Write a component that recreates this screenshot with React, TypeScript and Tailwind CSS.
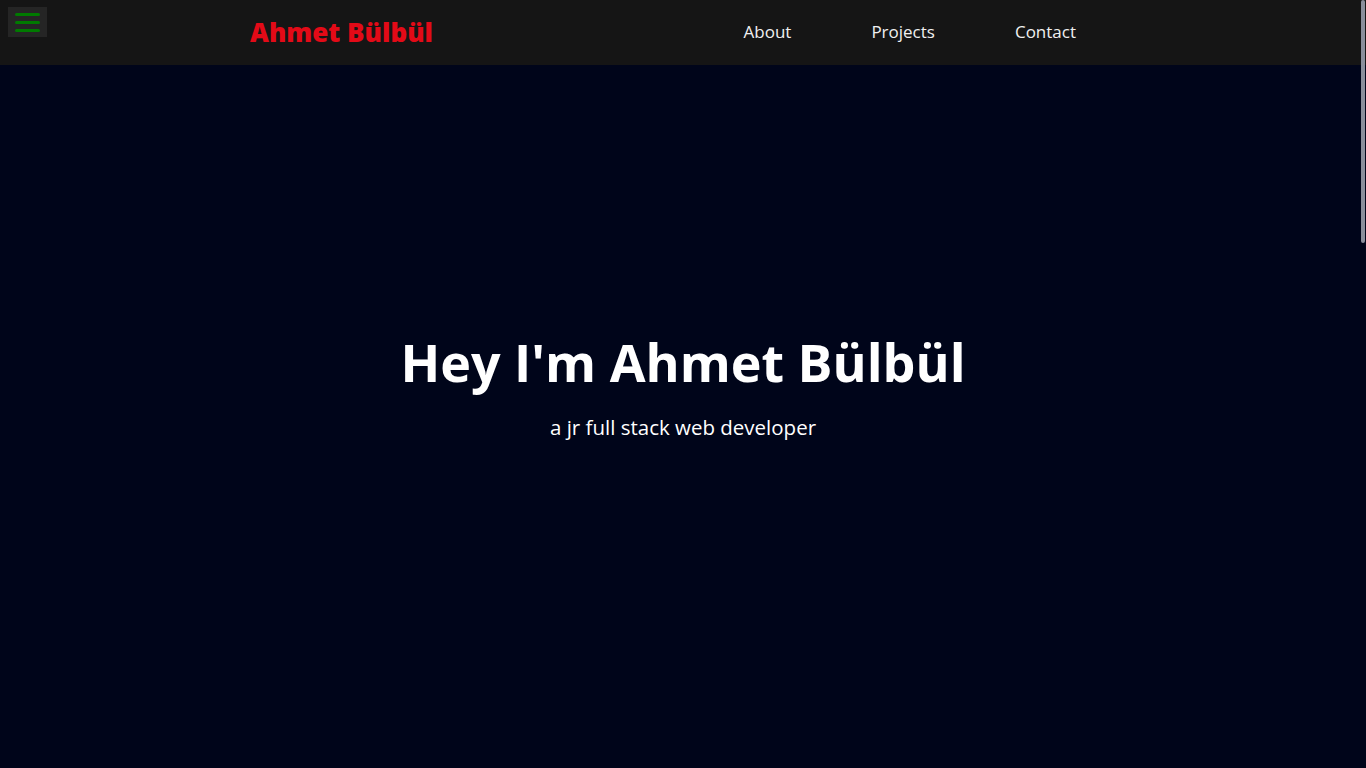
export default function App() {
  const links = ["About", "Projects", "Contact"];
  return (
    <div className="relative h-[768px] w-full overflow-hidden bg-[#00051a] font-['Open_Sans',sans-serif] text-white">
      <header className="flex h-[65px] items-start bg-[#151515]">
        <button className="ml-2 mt-[7px] flex h-[30px] w-[39px] flex-col items-center justify-center gap-[5px] bg-[#252525]">
          <span className="h-[3px] w-[25px] rounded-full bg-[#007a00]" />
          <span className="h-[3px] w-[25px] rounded-full bg-[#007a00]" />
          <span className="h-[3px] w-[25px] rounded-full bg-[#007a00]" />
        </button>
        <div className="ml-[203px] mt-[13px] text-[26px] font-extrabold leading-[38px] text-[#e30a17]">
          Ahmet Bülbül
        </div>
        <nav className="ml-auto mr-[290px] mt-[20px] flex gap-[80px] text-[17px] leading-[24px] text-[#f0f0f0]">
          {links.map((l) => (
            <a key={l} href="#">
              {l}
            </a>
          ))}
        </nav>
      </header>
      <main className="flex h-[703px] flex-col items-center pt-[266px]">
        <h1 className="text-[52px] font-bold leading-[62px]">Hey I'm Ahmet Bülbül</h1>
        <p className="mt-[20px] text-[20.5px] leading-[28px]">a jr full stack web developer</p>
      </main>
      <div className="absolute right-[1px] top-0 h-[243px] w-[4px] rounded-full bg-[#8a8f9c]" />
    </div>
  );
}
